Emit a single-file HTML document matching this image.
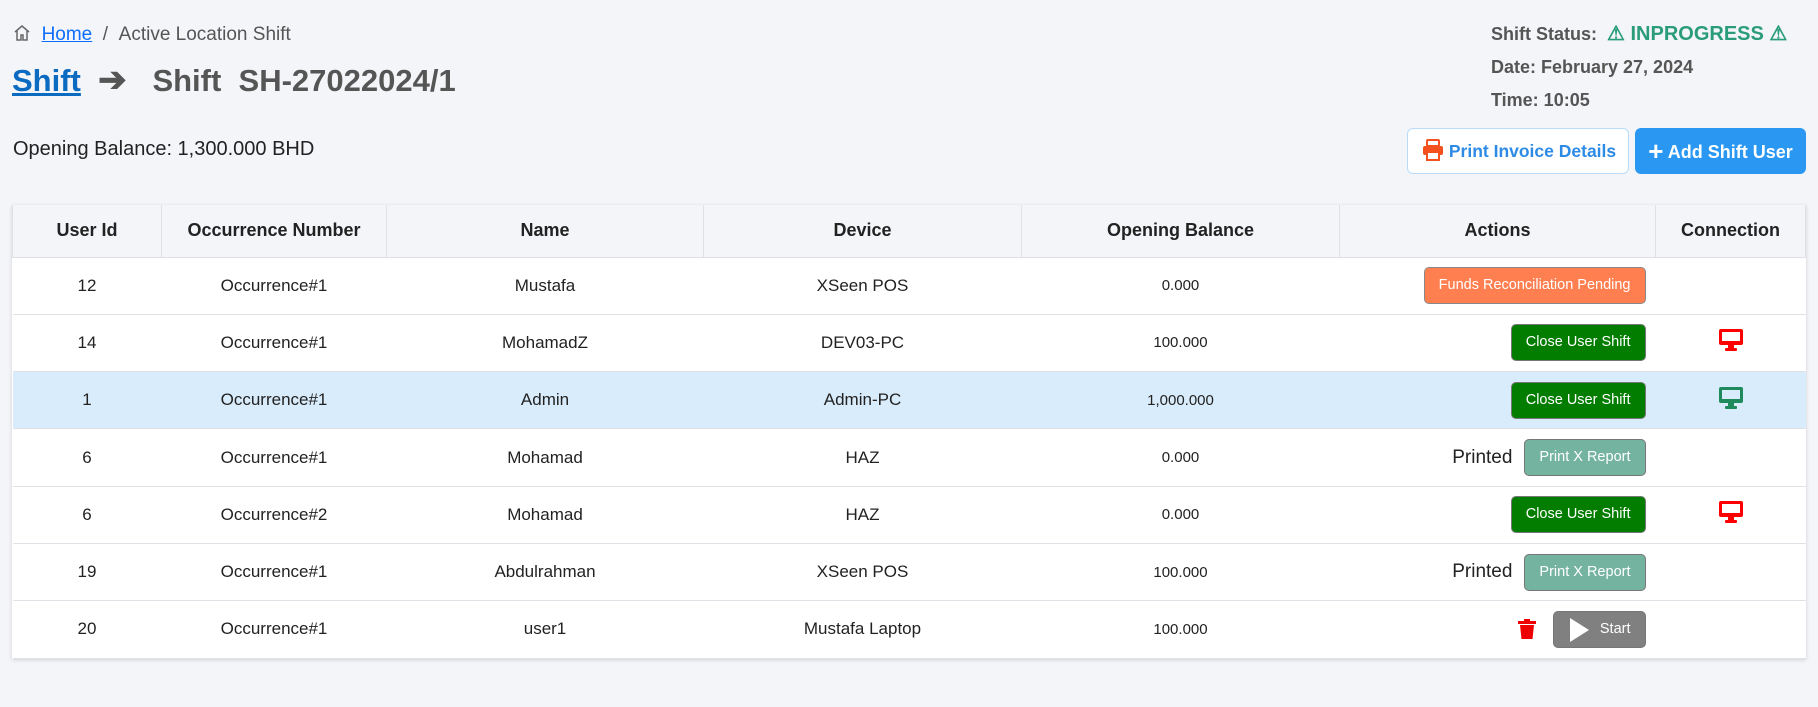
<!DOCTYPE html>
<html><head><meta charset="utf-8"><style>
*{box-sizing:border-box;margin:0;padding:0}
body{width:1818px;height:707px;background:#f4f5f9;font-family:"Liberation Sans",sans-serif;color:#222;position:relative;overflow:hidden}
.abs{position:absolute;white-space:nowrap}
table{position:absolute;left:12px;top:205px;width:1794px;border-collapse:collapse;background:#fff;box-shadow:0 1px 4px rgba(0,0,0,.15);table-layout:fixed}
th{height:52px;background:#f4f5f9;font-weight:bold;font-size:18px;color:#222;border:1px solid #dfe1e6;border-top:none}
td{height:57.3px;text-align:center;font-size:17px;border-bottom:1px solid #dfe1e6}
td.b{font-size:15px}
tr.hl td{background:#d9ecfb}
.act{text-align:right;padding-right:10px}
.btn{display:inline-block;vertical-align:middle;height:37px;line-height:35px;border-radius:5px;border:1px solid #777;color:#fff;font-size:14.5px;padding:0 14px}
.g{background:#037d00}.o{background:#ff7f50;border-color:#888}.t{background:#74b3a0}.s{background:#808080;width:93px;text-align:right;position:relative}
</style></head><body>
<div class="abs" style="left:13px;top:24px;font-size:19px;color:#555">
<svg width="18" height="18" viewBox="0 0 18 18" style="vertical-align:-2px"><path d="M2 8L9 2l7 6M4 7v9h4v-5h2v5h4V7" fill="none" stroke="#666" stroke-width="1.5"/></svg>
&nbsp;<span style="color:#0d6efd;text-decoration:underline">Home</span>&nbsp;&nbsp;/&nbsp;&nbsp;Active Location Shift</div>
<div class="abs" style="left:12px;top:60px;font-size:31px;font-weight:bold;color:#555"><span style="color:#0a6bc1;text-decoration:underline">Shift</span>&nbsp;&nbsp;<span style="font-size:34px">➔</span>&nbsp;&nbsp;&nbsp;Shift&nbsp; SH-27022024/1</div>
<div class="abs" style="left:13px;top:138px;font-size:20px;color:#222">Opening Balance: 1,300.000 BHD</div>
<div class="abs" style="left:1491px;top:18px;font-size:18px;font-weight:bold;color:#555;line-height:33px">Shift Status:&nbsp; <span style="color:#2a9d78;font-size:20px">⚠ INPROGRESS ⚠</span><br>Date: February 27, 2024<br>Time: 10:05</div>
<div class="abs" style="left:1407px;top:128px;width:222px;height:46px;background:#fff;border:1px solid #b8dcf8;border-radius:6px;color:#2d8be6;font-size:17.5px;font-weight:bold;line-height:44px;padding-left:14px">
<svg width="22" height="22" viewBox="0 0 22 22" style="vertical-align:-4px"><rect x="5" y="1" width="12" height="6" rx="1" fill="none" stroke="#f4511e" stroke-width="2"/><rect x="1" y="7" width="20" height="9" rx="2" fill="#f4511e"/><rect x="5" y="13" width="12" height="8" fill="#fff" stroke="#f4511e" stroke-width="2"/></svg> Print Invoice Details</div>
<div class="abs" style="left:1635px;top:128px;width:171px;height:46px;background:#2a98f2;border-radius:6px;color:#fff;font-size:18px;font-weight:bold;line-height:46px;text-align:center"><span style="font-size:26px;vertical-align:-2px">+</span> Add Shift User</div>
<table>
<tr><th style="width:149px">User Id</th><th style="width:225px">Occurrence Number</th><th style="width:317px">Name</th><th style="width:318px">Device</th><th style="width:318px">Opening Balance</th><th style="width:316px">Actions</th><th>Connection</th></tr>
<tr><td>12</td><td>Occurrence#1</td><td>Mustafa</td><td>XSeen POS</td><td class="b">0.000</td><td class="act"><span class="btn o">Funds Reconciliation Pending</span></td><td></td></tr>
<tr><td>14</td><td>Occurrence#1</td><td>MohamadZ</td><td>DEV03-PC</td><td class="b">100.000</td><td class="act"><span class="btn g">Close User Shift</span></td><td><svg width="26" height="24" viewBox="0 0 26 24"><rect x="1" y="1" width="24" height="16" rx="2" fill="#f00"/><rect x="4" y="4" width="18" height="9" fill="#fff"/><rect x="10" y="17" width="6" height="4" fill="#f00"/><rect x="7" y="20" width="12" height="3" rx="1" fill="#f00"/></svg></td></tr>
<tr class="hl"><td>1</td><td>Occurrence#1</td><td>Admin</td><td>Admin-PC</td><td class="b">1,000.000</td><td class="act"><span class="btn g">Close User Shift</span></td><td><svg width="26" height="24" viewBox="0 0 26 24"><rect x="1" y="1" width="24" height="16" rx="2" fill="#1f8a5b"/><rect x="4" y="4" width="18" height="9" fill="#d9ecfb"/><rect x="10" y="17" width="6" height="4" fill="#1f8a5b"/><rect x="7" y="20" width="12" height="3" rx="1" fill="#1f8a5b"/></svg></td></tr>
<tr><td>6</td><td>Occurrence#1</td><td>Mohamad</td><td>HAZ</td><td class="b">0.000</td><td class="act"><span style="font-size:19px;vertical-align:middle;margin-right:12px">Printed</span><span class="btn t">Print X Report</span></td><td></td></tr>
<tr><td>6</td><td>Occurrence#2</td><td>Mohamad</td><td>HAZ</td><td class="b">0.000</td><td class="act"><span class="btn g">Close User Shift</span></td><td><svg width="26" height="24" viewBox="0 0 26 24"><rect x="1" y="1" width="24" height="16" rx="2" fill="#f00"/><rect x="4" y="4" width="18" height="9" fill="#fff"/><rect x="10" y="17" width="6" height="4" fill="#f00"/><rect x="7" y="20" width="12" height="3" rx="1" fill="#f00"/></svg></td></tr>
<tr><td>19</td><td>Occurrence#1</td><td>Abdulrahman</td><td>XSeen POS</td><td class="b">100.000</td><td class="act"><span style="font-size:19px;vertical-align:middle;margin-right:12px">Printed</span><span class="btn t">Print X Report</span></td><td></td></tr>
<tr><td>20</td><td>Occurrence#1</td><td>user1</td><td>Mustafa Laptop</td><td class="b">100.000</td><td class="act"><svg width="20" height="22" viewBox="0 0 20 22" style="vertical-align:middle;margin-right:16px"><rect x="1" y="3" width="18" height="3" fill="#e00"/><rect x="7" y="1" width="6" height="3" fill="#e00"/><path d="M3 7h14l-1.5 14h-11z" fill="#e00"/></svg><span class="btn s"><svg width="22" height="26" viewBox="0 0 22 26" style="position:absolute;left:14px;top:5px"><path d="M2 1L21 13 2 25z" fill="#fff"/></svg>Start</span></td><td></td></tr>
</table>
</body></html>
